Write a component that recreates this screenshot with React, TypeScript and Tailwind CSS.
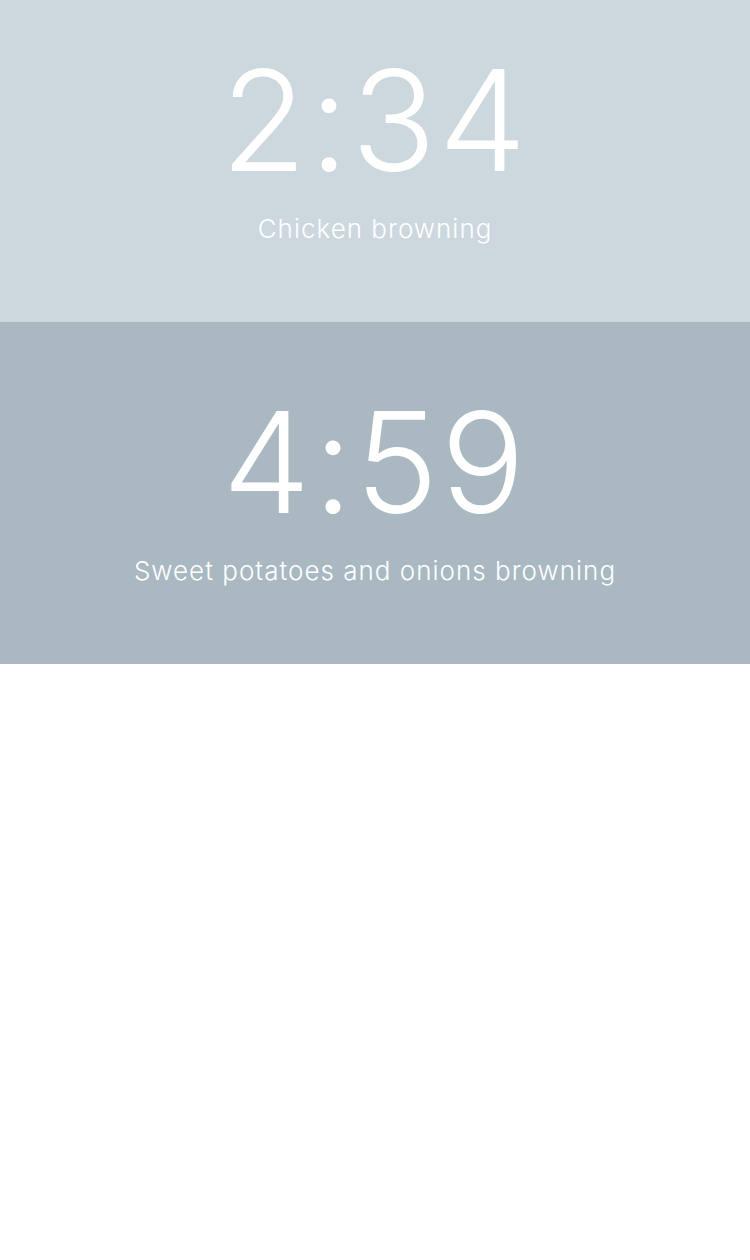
const timers = [
  { time: "2:34", label: "Chicken browning", panel: "h-[322px] pt-[50px] bg-[#cdd7de]" },
  { time: "4:59", label: "Sweet potatoes and onions browning", panel: "h-[342px] pt-[70px] bg-[#aab8c2]" },
];

export default function App() {
  return (
    <div className="min-h-[1260px] w-[750px] bg-white font-['Inter','Noto_Sans',sans-serif] text-white">
      {timers.map((t) => (
        <div key={t.time} className={`flex flex-col items-center ${t.panel}`}>
          <div className="text-[140px] leading-none font-light tracking-[2.5px]">{t.time}</div>
          <div className="mt-[26px] text-[26px] leading-none font-light tracking-[1px]">{t.label}</div>
        </div>
      ))}
    </div>
  );
}
